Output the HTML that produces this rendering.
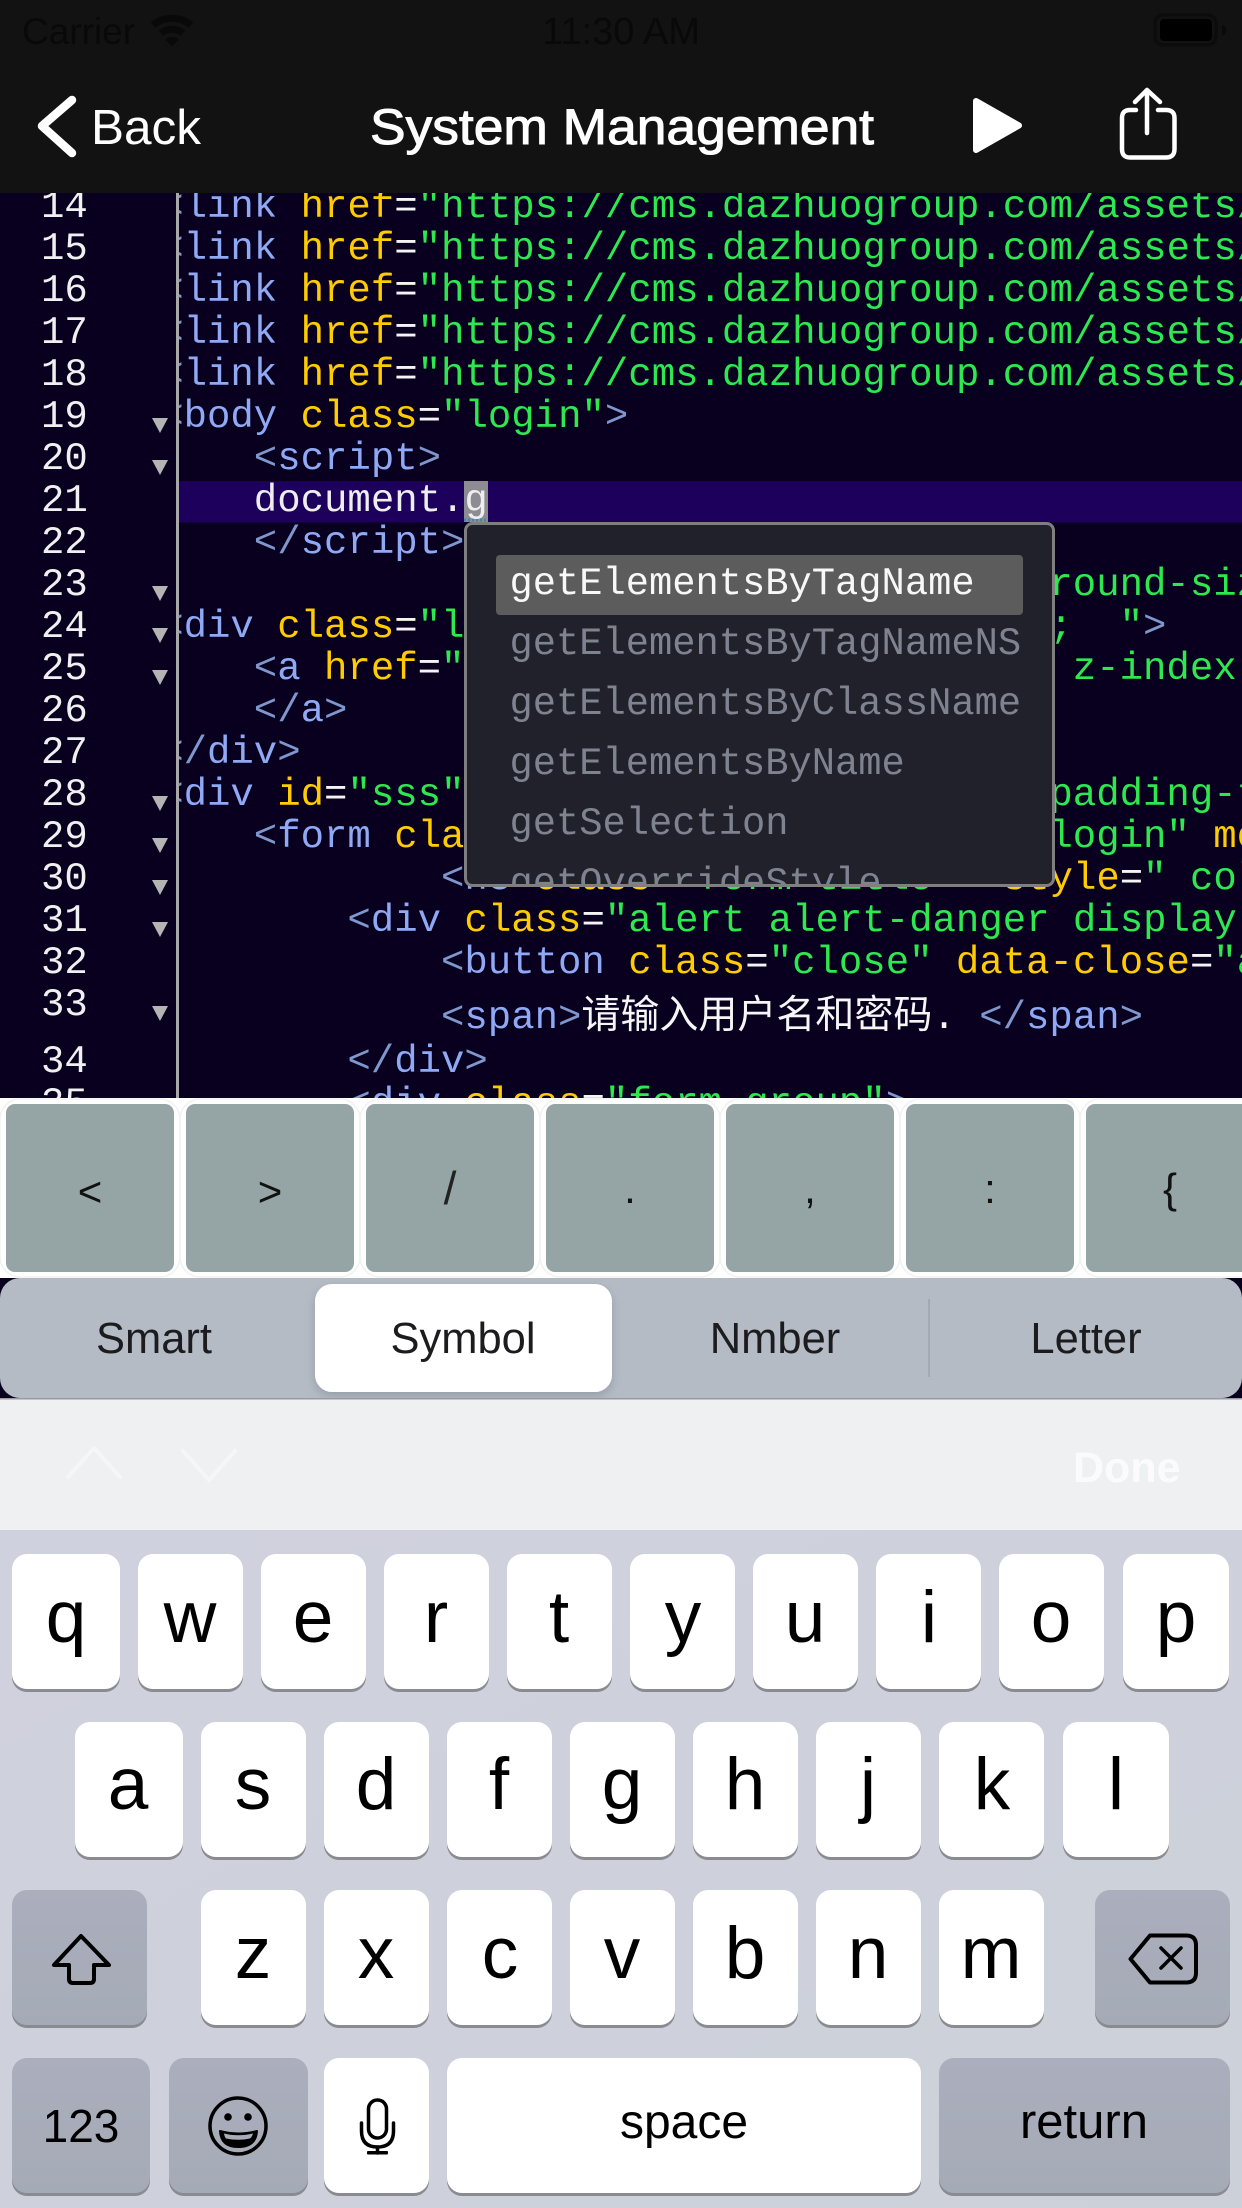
<!DOCTYPE html>
<html>
<head>
<meta charset="utf-8">
<style>
html,body{margin:0;padding:0;background:#08001e;width:1242px;height:2208px;overflow:hidden}
svg{display:block}
text{white-space:pre;font-family:"Liberation Sans","Noto Sans CJK SC",sans-serif}
.m text,text.m{font-family:"Liberation Mono","Noto Sans CJK SC",monospace;font-size:39px}
.b{fill:#7f97cc}.t{fill:#8fa9f5}.a{fill:#ffcc00}.s{fill:#2ee84f}.w{fill:#f4f4f4}
.n{fill:#eeeeee}
.ln text{fill:#f0f0f0}
.k{font-size:73px;fill:#000;text-anchor:middle}
.sym{font-size:42px;fill:#111;text-anchor:middle}
.seg{font-size:43.5px;fill:#1c1c1e;text-anchor:middle}
.m.pop text{fill:#7f8390;font-size:38.75px}
</style>
</head>
<body>
<svg width="1242" height="2208" viewBox="0 0 1242 2208" xmlns="http://www.w3.org/2000/svg">
<defs>
<clipPath id="cc"><rect x="179" y="193" width="1063" height="905"/></clipPath>
<clipPath id="cn"><rect x="0" y="193" width="176" height="905"/></clipPath>
<clipPath id="cp"><rect x="467" y="525" width="585" height="360"/></clipPath>
<linearGradient id="kb" x1="0" y1="0" x2="1" y2="1"><stop offset="0" stop-color="#d0d1de"/><stop offset="1" stop-color="#ccd1d9"/></linearGradient>
<linearGradient id="dk" x1="0" y1="0" x2="0" y2="1"><stop offset="0" stop-color="#abaebd"/><stop offset="1" stop-color="#a5abb6"/></linearGradient>
<filter id="sh" x="-20%" y="-20%" width="140%" height="140%"><feDropShadow dx="0" dy="4" stdDeviation="5" flood-color="#000" flood-opacity="0.16"/></filter>
</defs>

<!-- editor -->
<rect width="1242" height="1100" fill="#08001e"/>
<rect x="179" y="481" width="1063" height="41.500" fill="#1c005c"/>
<rect x="176" y="193" width="3" height="905" fill="#a8a8a8"/>

<g class="m ln" clip-path="url(#cn)">
<text x="41" y="217">14</text>
<text x="41" y="259">15</text>
<text x="41" y="301">16</text>
<text x="41" y="343">17</text>
<text x="41" y="385">18</text>
<text x="41" y="427">19</text>
<text x="41" y="469">20</text>
<text x="41" y="511">21</text>
<text x="41" y="553">22</text>
<text x="41" y="595">23</text>
<text x="41" y="637">24</text>
<text x="41" y="679">25</text>
<text x="41" y="721">26</text>
<text x="41" y="763">27</text>
<text x="41" y="805">28</text>
<text x="41" y="847">29</text>
<text x="41" y="889">30</text>
<text x="41" y="931">31</text>
<text x="41" y="973">32</text>
<text x="41" y="1015">33</text>
<text x="41" y="1072">34</text>
<text x="41" y="1114">35</text>
</g>

<g fill="#b4b4b4">
<path d="M152 418H168L160 433Z"/>
<path d="M152 460H168L160 475Z"/>
<path d="M152 586H168L160 601Z"/>
<path d="M152 628H168L160 643Z"/>
<path d="M152 670H168L160 685Z"/>
<path d="M152 796H168L160 811Z"/>
<path d="M152 838H168L160 853Z"/>
<path d="M152 880H168L160 895Z"/>
<path d="M152 922H168L160 937Z"/>
<path d="M152 1006H168L160 1021Z"/>
</g>

<rect x="464" y="481" width="24" height="41" fill="#8c8c92"/>
<line x1="464" y1="520" x2="488" y2="520" stroke="#3f86b5" stroke-width="3" stroke-dasharray="2 2"/>

<g class="m" clip-path="url(#cc)">
<text x="160.200" y="217"><tspan class="b">&lt;</tspan><tspan class="t">link</tspan> <tspan class="a">href</tspan><tspan class="w">=</tspan><tspan class="s">"https://cms.dazhuogroup.com/assets/</tspan></text>
<text x="160.200" y="259"><tspan class="b">&lt;</tspan><tspan class="t">link</tspan> <tspan class="a">href</tspan><tspan class="w">=</tspan><tspan class="s">"https://cms.dazhuogroup.com/assets/</tspan></text>
<text x="160.200" y="301"><tspan class="b">&lt;</tspan><tspan class="t">link</tspan> <tspan class="a">href</tspan><tspan class="w">=</tspan><tspan class="s">"https://cms.dazhuogroup.com/assets/</tspan></text>
<text x="160.200" y="343"><tspan class="b">&lt;</tspan><tspan class="t">link</tspan> <tspan class="a">href</tspan><tspan class="w">=</tspan><tspan class="s">"https://cms.dazhuogroup.com/assets/</tspan></text>
<text x="160.200" y="385"><tspan class="b">&lt;</tspan><tspan class="t">link</tspan> <tspan class="a">href</tspan><tspan class="w">=</tspan><tspan class="s">"https://cms.dazhuogroup.com/assets/</tspan></text>
<text x="160.200" y="427"><tspan class="b">&lt;</tspan><tspan class="t">body</tspan> <tspan class="a">class</tspan><tspan class="w">=</tspan><tspan class="s">"login"</tspan><tspan class="b">&gt;</tspan></text>
<text x="253.800" y="469"><tspan class="b">&lt;</tspan><tspan class="t">script</tspan><tspan class="b">&gt;</tspan></text>
<text x="253.800" y="511" class="n">document.g</text>
<text x="253.800" y="553"><tspan class="b">&lt;/</tspan><tspan class="t">script</tspan><tspan class="b">&gt;</tspan></text>
<text x="1049.400" y="595" class="s">round-size</text>
<text x="160.200" y="637"><tspan class="b">&lt;</tspan><tspan class="t">div</tspan> <tspan class="a">class</tspan><tspan class="w">=</tspan><tspan class="s">"l</tspan></text>
<text x="1049.400" y="637"><tspan class="s">;  "</tspan><tspan class="b">&gt;</tspan></text>
<text x="253.800" y="679"><tspan class="b">&lt;</tspan><tspan class="t">a</tspan> <tspan class="a">href</tspan><tspan class="w">=</tspan><tspan class="s">"</tspan></text>
<text x="1072.800" y="679" class="s">z-index:</text>
<text x="253.800" y="721"><tspan class="b">&lt;/</tspan><tspan class="t">a</tspan><tspan class="b">&gt;</tspan></text>
<text x="160.200" y="763"><tspan class="b">&lt;/</tspan><tspan class="t">div</tspan><tspan class="b">&gt;</tspan></text>
<text x="160.200" y="805"><tspan class="b">&lt;</tspan><tspan class="t">div</tspan> <tspan class="a">id</tspan><tspan class="w">=</tspan><tspan class="s">"sss"</tspan></text>
<text x="1049.400" y="805" class="s">padding-top</text>
<text x="253.800" y="847"><tspan class="b">&lt;</tspan><tspan class="t">form</tspan> <tspan class="a">cla</tspan></text>
<text x="1049.400" y="847"><tspan class="s">login"</tspan> <tspan class="a">method</tspan></text>
<text x="441" y="889"><tspan class="b">&lt;</tspan><tspan class="t">h3</tspan> <tspan class="a">class</tspan><tspan class="w">=</tspan><tspan class="s">"form-title"</tspan>  <tspan class="a">style</tspan><tspan class="w">=</tspan><tspan class="s">" color</tspan></text>
<text x="347.400" y="931"><tspan class="b">&lt;</tspan><tspan class="t">div</tspan> <tspan class="a">class</tspan><tspan class="w">=</tspan><tspan class="s">"alert alert-danger display-hide</tspan></text>
<text x="441" y="973"><tspan class="b">&lt;</tspan><tspan class="t">button</tspan> <tspan class="a">class</tspan><tspan class="w">=</tspan><tspan class="s">"close"</tspan> <tspan class="a">data-close</tspan><tspan class="w">=</tspan><tspan class="s">"alert</tspan></text>
<text x="441" y="1028"><tspan class="b">&lt;</tspan><tspan class="t">span</tspan><tspan class="b">&gt;</tspan></text>
<text x="581.400" y="1028" fill="#f6f6f6" style="font-family:'Noto Sans CJK SC',sans-serif">请输入用户名和密码</text>
<text x="932.400" y="1028"><tspan fill="#f6f6f6">. </tspan><tspan class="b">&lt;/</tspan><tspan class="t">span</tspan><tspan class="b">&gt;</tspan></text>
<text x="347.400" y="1072"><tspan class="b">&lt;/</tspan><tspan class="t">div</tspan><tspan class="b">&gt;</tspan></text>
<text x="347.400" y="1114"><tspan class="b">&lt;</tspan><tspan class="t">div</tspan> <tspan class="a">class</tspan><tspan class="w">=</tspan><tspan class="s">"form-group"</tspan><tspan class="b">&gt;</tspan></text>
</g>

<!-- autocomplete popup -->
<rect x="465.500" y="523.500" width="588" height="362" rx="7" fill="#20212a"/>
<rect x="496" y="555" width="527" height="60" rx="4" fill="#5c5c5c"/>
<g class="m pop" clip-path="url(#cp)">
<text x="509.500" y="594" style="fill:#f8f8f8">getElementsByTagName</text>
<text x="509.500" y="654">getElementsByTagNameNS</text>
<text x="509.500" y="714">getElementsByClassName</text>
<text x="509.500" y="774">getElementsByName</text>
<text x="509.500" y="834">getSelection</text>
<text x="509.500" y="894">getOverrideStyle</text>
</g>
<rect x="465.500" y="523.500" width="588" height="362" rx="7" fill="none" stroke="#7f7f7f" stroke-width="3"/>

<!-- status + nav bar -->
<rect width="1242" height="193" fill="#121212"/>
<text x="22" y="44" font-size="37" fill="#090909">Carrier</text>
<g fill="none" stroke="#090909">
<path d="M153 25A30 30 0 0 1 191 25" stroke-width="7"/>
<path d="M161 33A18 18 0 0 1 183 33" stroke-width="7"/>
</g>
<path d="M165 39.500A11 11 0 0 1 179 39.500L172 46.500Z" fill="#090909"/>
<text x="621" y="44" font-size="38" fill="#090909" text-anchor="middle">11:30 AM</text>
<rect x="1155" y="15" width="61" height="30" rx="8" fill="none" stroke="#0c0c0c" stroke-width="3.500"/>
<rect x="1160" y="19" width="52" height="22" rx="4" fill="#000"/>
<path d="M1222 24.500A6 6 0 0 1 1222 36Z" fill="#0a0a0a"/>

<path d="M72 100L42 126L72 153" fill="none" stroke="#fff" stroke-width="8.500" stroke-linecap="round" stroke-linejoin="round"/>
<text x="91" y="144" font-size="49.500" fill="#fff">Back</text>
<text x="370" y="144" font-size="50" fill="#fff" stroke="#fff" stroke-width="1" textLength="504" lengthAdjust="spacingAndGlyphs">System Management</text>
<path d="M976 101L1019 125.500L976 150Z" fill="#fff" stroke="#fff" stroke-width="6" stroke-linejoin="round"/>
<g fill="none" stroke="#fff" stroke-width="4.500" stroke-linecap="round" stroke-linejoin="round">
<path d="M1136 110H1130Q1122 110 1122 118V149Q1122 157.500 1130 157.500H1166Q1174.500 157.500 1174.500 149V118Q1174.500 110 1166 110H1158"/>
<path d="M1147 133V91"/>
<path d="M1135 102L1147 90L1160 102"/>
</g>

<!-- symbol strip -->
<rect x="0" y="1098" width="1242" height="180" fill="#fff"/>
<g fill="none" stroke="#f0f2f2" stroke-width="1.500">
<rect x="0" y="1099" width="180" height="178" rx="20"/>
<rect x="180" y="1099" width="180" height="178" rx="20"/>
<rect x="360" y="1099" width="180" height="178" rx="20"/>
<rect x="540" y="1099" width="180" height="178" rx="20"/>
<rect x="720" y="1099" width="180" height="178" rx="20"/>
<rect x="900" y="1099" width="180" height="178" rx="20"/>
<rect x="1080" y="1099" width="180" height="178" rx="20"/>
</g>
<g fill="#95a5a6">
<rect x="6" y="1104" width="168" height="168" rx="9"/>
<rect x="186" y="1104" width="168" height="168" rx="9"/>
<rect x="366" y="1104" width="168" height="168" rx="9"/>
<rect x="546" y="1104" width="168" height="168" rx="9"/>
<rect x="726" y="1104" width="168" height="168" rx="9"/>
<rect x="906" y="1104" width="168" height="168" rx="9"/>
<rect x="1086" y="1104" width="168" height="168" rx="9"/>
</g>
<text class="sym" x="90" y="1206">&lt;</text>
<text class="sym" x="270" y="1206">&gt;</text>
<text class="sym" x="450" y="1204" style="font-size:46px;font-weight:400;fill:#222">/</text>
<text class="sym" x="630" y="1203">.</text>
<text class="sym" x="810" y="1203">,</text>
<text class="sym" x="990" y="1203">:</text>
<text class="sym" x="1170" y="1203">{</text>

<!-- segmented control -->
<rect x="0" y="1278" width="1242" height="120" fill="#08001e"/>
<rect x="0" y="1278" width="1242" height="120" rx="20" fill="#b4bbc5"/>
<rect x="928" y="1299" width="2" height="78" fill="#a2a9b3"/>
<rect x="315" y="1284" width="297" height="108" rx="17" fill="#fff" filter="url(#sh)"/>
<text class="seg" x="154" y="1353">Smart</text>
<text class="seg" x="463" y="1353">Symbol</text>
<text class="seg" x="775" y="1353">Nmber</text>
<text class="seg" x="1086" y="1353">Letter</text>

<!-- accessory bar -->
<rect x="0" y="1398" width="1242" height="132" fill="#eff0f2"/>
<rect x="0" y="1398" width="1242" height="1.500" fill="#9a9a9e"/>
<g fill="none" stroke="#f5f6f7" stroke-width="4" stroke-linecap="round" stroke-linejoin="round">
<path d="M68 1477L94 1448L120 1477"/>
<path d="M183 1451L209 1480L235 1451"/>
</g>
<text x="1073" y="1482" font-size="43" font-weight="700" fill="#fbfbfc">Done</text>

<!-- keyboard -->
<rect x="0" y="1530" width="1242" height="678" fill="url(#kb)"/>
<g fill="#8a8b91">
<rect x="12" y="1557" width="108" height="135" rx="15"/>
<rect x="138" y="1557" width="105" height="135" rx="15"/>
<rect x="261" y="1557" width="105" height="135" rx="15"/>
<rect x="384" y="1557" width="105" height="135" rx="15"/>
<rect x="507" y="1557" width="105" height="135" rx="15"/>
<rect x="630" y="1557" width="105" height="135" rx="15"/>
<rect x="753" y="1557" width="105" height="135" rx="15"/>
<rect x="876" y="1557" width="105" height="135" rx="15"/>
<rect x="999" y="1557" width="105" height="135" rx="15"/>
<rect x="1123" y="1557" width="106" height="135" rx="15"/>
<rect x="75" y="1725" width="108" height="135" rx="15"/>
<rect x="201" y="1725" width="105" height="135" rx="15"/>
<rect x="324" y="1725" width="105" height="135" rx="15"/>
<rect x="447" y="1725" width="105" height="135" rx="15"/>
<rect x="570" y="1725" width="105" height="135" rx="15"/>
<rect x="693" y="1725" width="105" height="135" rx="15"/>
<rect x="816" y="1725" width="105" height="135" rx="15"/>
<rect x="939" y="1725" width="105" height="135" rx="15"/>
<rect x="1063" y="1725" width="106" height="135" rx="15"/>
<rect x="12" y="1893" width="135" height="135" rx="15"/>
<rect x="201" y="1893" width="105" height="135" rx="15"/>
<rect x="324" y="1893" width="105" height="135" rx="15"/>
<rect x="447" y="1893" width="105" height="135" rx="15"/>
<rect x="570" y="1893" width="105" height="135" rx="15"/>
<rect x="693" y="1893" width="105" height="135" rx="15"/>
<rect x="816" y="1893" width="105" height="135" rx="15"/>
<rect x="939" y="1893" width="105" height="135" rx="15"/>
<rect x="1095" y="1893" width="135" height="135" rx="15"/>
<rect x="12" y="2061" width="138" height="135" rx="15"/>
<rect x="169" y="2061" width="139" height="135" rx="15"/>
<rect x="324" y="2061" width="105" height="135" rx="15"/>
<rect x="447" y="2061" width="474" height="135" rx="15"/>
<rect x="939" y="2061" width="291" height="135" rx="15"/>
</g>
<g fill="#fff">
<rect x="12" y="1554" width="108" height="135" rx="15"/>
<rect x="138" y="1554" width="105" height="135" rx="15"/>
<rect x="261" y="1554" width="105" height="135" rx="15"/>
<rect x="384" y="1554" width="105" height="135" rx="15"/>
<rect x="507" y="1554" width="105" height="135" rx="15"/>
<rect x="630" y="1554" width="105" height="135" rx="15"/>
<rect x="753" y="1554" width="105" height="135" rx="15"/>
<rect x="876" y="1554" width="105" height="135" rx="15"/>
<rect x="999" y="1554" width="105" height="135" rx="15"/>
<rect x="1123" y="1554" width="106" height="135" rx="15"/>
<rect x="75" y="1722" width="108" height="135" rx="15"/>
<rect x="201" y="1722" width="105" height="135" rx="15"/>
<rect x="324" y="1722" width="105" height="135" rx="15"/>
<rect x="447" y="1722" width="105" height="135" rx="15"/>
<rect x="570" y="1722" width="105" height="135" rx="15"/>
<rect x="693" y="1722" width="105" height="135" rx="15"/>
<rect x="816" y="1722" width="105" height="135" rx="15"/>
<rect x="939" y="1722" width="105" height="135" rx="15"/>
<rect x="1063" y="1722" width="106" height="135" rx="15"/>
<rect x="201" y="1890" width="105" height="135" rx="15"/>
<rect x="324" y="1890" width="105" height="135" rx="15"/>
<rect x="447" y="1890" width="105" height="135" rx="15"/>
<rect x="570" y="1890" width="105" height="135" rx="15"/>
<rect x="693" y="1890" width="105" height="135" rx="15"/>
<rect x="816" y="1890" width="105" height="135" rx="15"/>
<rect x="939" y="1890" width="105" height="135" rx="15"/>
<rect x="324" y="2058" width="105" height="135" rx="15"/>
<rect x="447" y="2058" width="474" height="135" rx="15"/>
</g>
<g fill="url(#dk)">
<rect x="12" y="1890" width="135" height="135" rx="15"/>
<rect x="1095" y="1890" width="135" height="135" rx="15"/>
<rect x="12" y="2058" width="138" height="135" rx="15"/>
<rect x="169" y="2058" width="139" height="135" rx="15"/>
<rect x="939" y="2058" width="291" height="135" rx="15"/>
</g>

<text class="k" x="66" y="1642">q</text>
<text class="k" x="190" y="1642">w</text>
<text class="k" x="313" y="1642">e</text>
<text class="k" x="436" y="1642">r</text>
<text class="k" x="559" y="1642">t</text>
<text class="k" x="683" y="1642">y</text>
<text class="k" x="805" y="1642">u</text>
<text class="k" x="929" y="1642">i</text>
<text class="k" x="1051" y="1642">o</text>
<text class="k" x="1176" y="1642">p</text>
<text class="k" x="128" y="1809">a</text>
<text class="k" x="253" y="1809">s</text>
<text class="k" x="376" y="1809">d</text>
<text class="k" x="499" y="1809">f</text>
<text class="k" x="622" y="1809">g</text>
<text class="k" x="745" y="1809">h</text>
<text class="k" x="868" y="1809">j</text>
<text class="k" x="992" y="1809">k</text>
<text class="k" x="1116" y="1809">l</text>
<text class="k" x="253" y="1978">z</text>
<text class="k" x="376" y="1978">x</text>
<text class="k" x="500" y="1978">c</text>
<text class="k" x="622" y="1978">v</text>
<text class="k" x="745" y="1978">b</text>
<text class="k" x="868" y="1978">n</text>
<text class="k" x="991" y="1978">m</text>

<text x="81" y="2142" font-size="46" fill="#000" text-anchor="middle">123</text>
<text x="684" y="2138" font-size="48" fill="#000" text-anchor="middle">space</text>
<text x="1084" y="2138" font-size="49" fill="#000" text-anchor="middle">return</text>

<!-- shift -->
<path d="M81 1936L54 1965H69V1979Q69 1983 73 1983H90Q94 1983 94 1979V1965H109Z" fill="none" stroke="#000" stroke-width="4" stroke-linejoin="round"/>
<!-- delete -->
<g fill="none" stroke="#000" stroke-width="4" stroke-linecap="round" stroke-linejoin="round">
<path d="M1150 1935.500H1186Q1196 1935.500 1196 1945V1973Q1196 1982.500 1186 1982.500H1150L1130.500 1959Z"/>
<path d="M1161 1948L1181 1968M1181 1948L1161 1968" stroke-width="3.500"/>
</g>
<!-- emoji -->
<circle cx="238" cy="2126" r="28" fill="none" stroke="#000" stroke-width="3.500"/>
<circle cx="228" cy="2117" r="3.800" fill="#000"/>
<circle cx="248" cy="2117" r="3.800" fill="#000"/>
<path d="M220 2131Q238 2136 257 2131Q256 2147 238 2147Q221 2147 220 2131Z" fill="#000" stroke="#000" stroke-width="2" stroke-linejoin="round"/>
<path d="M224 2133.500Q238 2137 253 2133.500Q252 2137 250 2138.500Q238 2141 226 2138.500Q224.500 2137 224 2133.500Z" fill="#a9adba"/>
<!-- mic -->
<g fill="none" stroke="#000" stroke-width="3.500" stroke-linecap="round">
<rect x="368.500" y="2100" width="18" height="38" rx="9"/>
<path d="M361.500 2123V2131Q361.500 2147 377.500 2147Q393.500 2147 393.500 2131V2123"/>
<path d="M377.500 2147V2153"/>
</g>
<rect x="367" y="2151" width="21" height="3.500" rx="1" fill="#000"/>
</svg>
</body>
</html>
